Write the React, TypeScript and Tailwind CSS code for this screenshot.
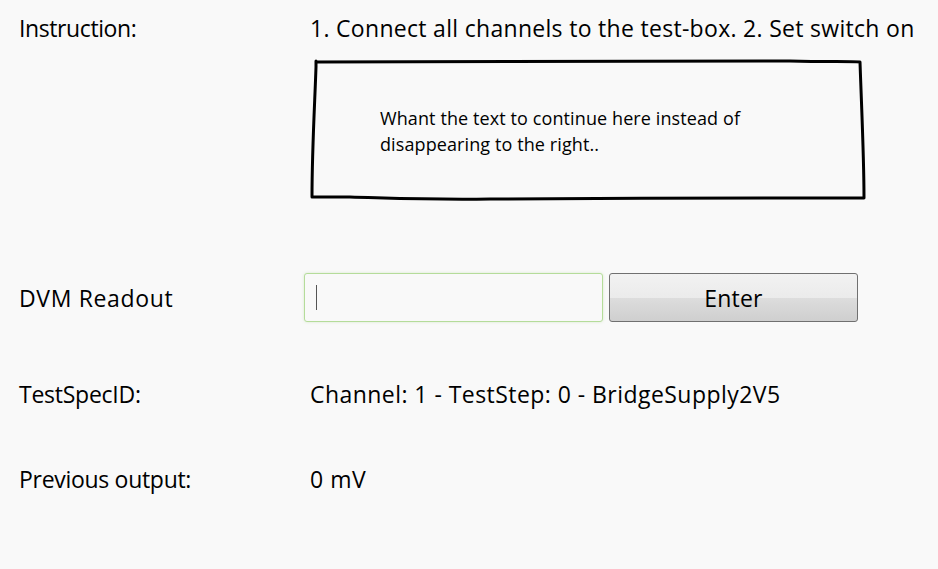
import React from "react";

function SketchBox({ children }: { children: React.ReactNode }) {
  return (
    <div className="relative w-[556px] h-[142px]">
      <svg
        className="absolute inset-0"
        width="556"
        height="142"
        viewBox="0 0 556 142"
        fill="none"
      >
        <path
          d="M6 2 L6 8 C5 40 2 90 2 138 L40 138 C80 139 120 141 180 140 C300 139 450 139 554 139 C554 100 552 60 550 3 C540 2 520 3 480 2 C400 2 300 2 200 2.5 C120 3 60 3 6 3"
          stroke="#000"
          strokeWidth="3"
          strokeLinejoin="round"
          strokeLinecap="round"
        />
      </svg>
      <div className="relative pt-[46px] pl-[70px] text-[18px] leading-[26px] tracking-[0.1px] text-black">
        {children}
      </div>
    </div>
  );
}

export default function App() {
  return (
    <div
      className="w-[938px] h-[569px] overflow-hidden bg-[#f9f9f9] text-black"
      style={{ fontFamily: "'Open Sans', 'Noto Sans', sans-serif" }}
    >
      <div className="flex pt-[13px] pl-[19px]">
        <div className="w-[291px] text-[23px] leading-[30px] tracking-[-0.4px]">Instruction:</div>
        <div className="flex-1 min-w-0 overflow-hidden">
          <div className="text-[23px] leading-[30px] tracking-[0.3px] whitespace-nowrap">
            1. Connect all channels to the test-box. 2. Set switch on
          </div>
          <div className="mt-[16px]">
            <SketchBox>
              Whant the text to continue here instead of
              <br />
              disappearing to the right..
            </SketchBox>
          </div>
        </div>
      </div>

      <div className="flex items-center pl-[19px] mt-[72px]">
        <div className="w-[285px] text-[23px] leading-[30px] tracking-[0.65px]">DVM Readout</div>
        <div className="flex gap-[6px]">
          <div className="w-[299px] h-[49px] rounded-[3px] border border-[#b5dc9a] bg-[#f9f9f9] shadow-[0_0_3px_rgba(160,210,130,0.35)] flex items-center pl-[11px]">
            <div className="w-px h-[25px] bg-[#555]" />
          </div>
          <button className="w-[249px] h-[49px] rounded-[3px] border border-[#707070] bg-[linear-gradient(to_bottom,#f2f2f2_0%,#ebebeb_50%,#dddddd_50%,#cfcfcf_100%)] text-[23px] leading-[30px] tracking-[0.2px] text-black">
            Enter
          </button>
        </div>
      </div>

      <div className="flex items-center pl-[19px] mt-[57px]">
        <div className="w-[291px] text-[23px] leading-[30px] tracking-[-0.25px]">TestSpecID:</div>
        <div className="text-[23px] leading-[30px] tracking-[0.45px]">Channel: 1 - TestStep: 0 - BridgeSupply2V5</div>
      </div>

      <div className="flex items-center pl-[19px] mt-[55px]">
        <div className="w-[291px] text-[23px] leading-[30px] tracking-[-0.3px]">Previous output:</div>
        <div className="text-[23px] leading-[30px] tracking-[0.5px]">0 mV</div>
      </div>
    </div>
  );
}
